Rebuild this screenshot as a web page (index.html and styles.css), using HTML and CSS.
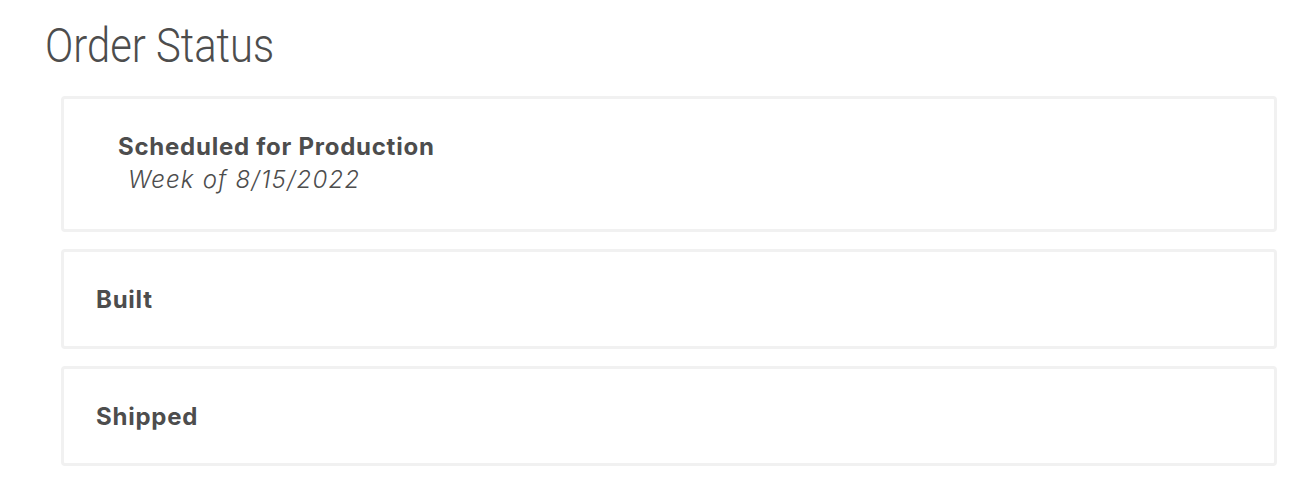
FILE: index.html
```html
<!DOCTYPE html>
<html>
<head>
<meta charset="utf-8">
<link rel="stylesheet" href="styles.css">
</head>
<body>
<div class="page">
  <h1 class="title"><span class="title-text">Order Status</span></h1>
  <div class="cards">
    <div class="card card-first">
      <div class="card-title">Scheduled for Production</div>
      <div class="card-sub">Week of 8/15/2022</div>
    </div>
    <div class="card">
      <div class="card-title">Built</div>
    </div>
    <div class="card">
      <div class="card-title">Shipped</div>
    </div>
  </div>
</div>
</body>
</html>
```
FILE: styles.css
```css
html, body {
  margin: 0;
  padding: 0;
  background: #ffffff;
}
.page {
  width: 1290px;
  height: 498px;
  box-sizing: border-box;
  padding: 16px 13px 0 45px;
  font-family: "Inter", "Noto Sans", sans-serif;
  color: #4d4d4d;
}
.title {
  margin: 0;
  font-family: "Roboto", sans-serif;
  font-weight: 300;
  font-size: 48px;
  line-height: 60px;
  color: #4d4d4d;
}
.title-text {
  display: inline-block;
  transform: scaleX(0.87);
  transform-origin: left center;
}
.cards {
  margin-top: 20px;
  margin-left: 16px;
  display: flex;
  flex-direction: column;
  gap: 17px;
}
.card {
  border: 3px solid #f1f1f1;
  border-radius: 4px;
  height: 100px;
  box-sizing: border-box;
  padding: 33px 0 0 32px;
}
.card-first {
  height: 136px;
  padding: 33px 0 0 54px;
}
.card-title {
  font-size: 24px;
  font-weight: 700;
  letter-spacing: 0.75px;
  line-height: 30px;
  color: #4d4d4d;
}
.card-sub {
  margin-left: 10px;
  margin-top: 3px;
  font-size: 24px;
  font-style: italic;
  font-weight: 300;
  letter-spacing: 1.2px;
  line-height: 30px;
  color: #4d4d4d;
}
```
